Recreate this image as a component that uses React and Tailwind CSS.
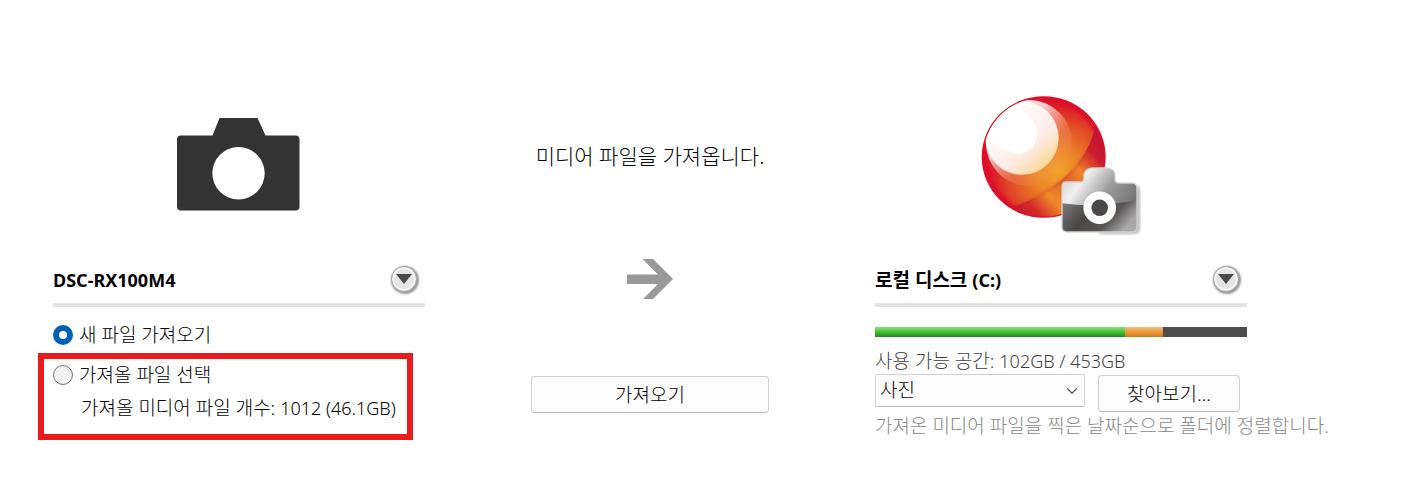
import { ChevronDown } from "lucide-react";

function CameraIcon() {
  return (
    <svg width="124" height="94" viewBox="0 0 124 94" aria-hidden="true">
      <path
        fill="#333333"
        fillRule="evenodd"
        d="M42.500 1H80.500L88.500 18.500H118.500Q122.500 18.500 122.500 22.500V89.500Q122.500 93.500 118.500 93.500H4Q0 93.500 0 89.500V22.500Q0 18.500 4 18.500H35.500ZM61.500 30A26.200 26.200 0 1 0 61.500 82.400A26.200 26.200 0 1 0 61.500 30Z"
      />
    </svg>
  );
}

function OrbIcon() {
  return (
    <svg width="160" height="140" viewBox="21 16 160 140" aria-hidden="true">
      <defs>
        <radialGradient id="orb" gradientUnits="userSpaceOnUse" cx="98" cy="92" r="66">
          <stop offset="0" stopColor="#f2a42c" />
          <stop offset="0.35" stopColor="#ec8526" />
          <stop offset="0.75" stopColor="#e24a26" />
          <stop offset="1" stopColor="#dc1a28" />
        </radialGradient>
        <linearGradient id="wedge" gradientUnits="userSpaceOnUse" x1="142" y1="50" x2="52" y2="134">
          <stop offset="0" stopColor="#bd1238" />
          <stop offset="0.18" stopColor="#cc1c2e" />
          <stop offset="0.36" stopColor="#ec8628" />
          <stop offset="0.5" stopColor="#e0602a" />
          <stop offset="0.68" stopColor="#ee8c28" />
          <stop offset="0.84" stopColor="#d42a2a" />
          <stop offset="1" stopColor="#bd1238" />
        </linearGradient>
        <linearGradient id="halo" gradientUnits="userSpaceOnUse" x1="38" y1="28" x2="98" y2="94">
          <stop offset="0" stopColor="#fff" />
          <stop offset="0.35" stopColor="#fff" stopOpacity="0.75" />
          <stop offset="0.7" stopColor="#f5a080" stopOpacity="0.3" />
          <stop offset="1" stopColor="#f5a080" stopOpacity="0" />
        </linearGradient>
        <linearGradient id="shine" gradientUnits="userSpaceOnUse" x1="40" y1="34" x2="86" y2="88">
          <stop offset="0" stopColor="#fff" />
          <stop offset="0.65" stopColor="#fdebe4" />
          <stop offset="1" stopColor="#f9d790" />
        </linearGradient>
        <linearGradient id="metal" x1="0" y1="0" x2="1" y2="0.6">
          <stop offset="0" stopColor="#c4c4c4" />
          <stop offset="0.3" stopColor="#f0f0f0" />
          <stop offset="0.6" stopColor="#9a9a9a" />
          <stop offset="1" stopColor="#666" />
        </linearGradient>
        <linearGradient id="base" x1="0" y1="0" x2="1" y2="0.4">
          <stop offset="0" stopColor="#858585" />
          <stop offset="0.45" stopColor="#4a4646" />
          <stop offset="0.75" stopColor="#5a5656" />
          <stop offset="1" stopColor="#a8a8a8" />
        </linearGradient>
        <clipPath id="ball">
          <ellipse cx="83.700" cy="77" rx="60.600" ry="59.500" />
        </clipPath>
        <clipPath id="body">
          <path d="M106 102H121Q124 102 124 98V94Q126 88 133 88H146Q154 88 155 94V99Q155 103 159 103H172Q177 103 177 108V147Q177 152 172 152H107Q102 152 102 147V107Q102 102 106 102Z" />
        </clipPath>
        <filter id="soft" x="-20%" y="-20%" width="140%" height="140%">
          <feGaussianBlur stdDeviation="1.500" />
        </filter>
        <filter id="edge" x="-10%" y="-10%" width="120%" height="120%">
          <feGaussianBlur stdDeviation="0.500" />
        </filter>
      </defs>
      <ellipse cx="83.700" cy="77" rx="62" ry="60.800" fill="#dc0f2b" />
      <circle cx="84.500" cy="78" r="56" fill="url(#orb)" filter="url(#soft)" />
      <g clipPath="url(#ball)">
        <path d="M137 40Q131 72 108 94Q84 118 46 129L60 145H120L150 110V50Z" fill="url(#wedge)" filter="url(#edge)" />
        <path d="M133 57Q125 80 107 96Q86 115 58 125" fill="none" stroke="#c3302a" strokeWidth="2" opacity="0.4" filter="url(#soft)" />
        <g filter="url(#edge)">
          <circle cx="69" cy="63" r="43" fill="url(#halo)" />
          <circle cx="62" cy="58" r="36.700" fill="url(#shine)" />
        </g>
        <circle cx="58" cy="54" r="19.500" fill="#fff" filter="url(#edge)" />
        <ellipse cx="49" cy="48" rx="21" ry="22" fill="#fff" filter="url(#soft)" />
      </g>
      <path d="M108 105H174Q180 105 180 111V149Q180 154 174 154H140Z" fill="#999" opacity="0.7" filter="url(#soft)" />
      <g clipPath="url(#body)">
        <rect x="100" y="86" width="80" height="68" fill="url(#metal)" />
        <path d="M100 123Q140 129 179 119V154H100Z" fill="url(#base)" />
      </g>
      <path
        d="M106 102H121Q124 102 124 98V94Q126 88 133 88H146Q154 88 155 94V99Q155 103 159 103H172Q177 103 177 108V147Q177 152 172 152H107Q102 152 102 147V107Q102 102 106 102Z"
        fill="none"
        stroke="#d2d4d4"
        strokeWidth="1.300"
      />
      <circle cx="139.700" cy="127.800" r="12.300" fill="#4b4848" stroke="#fff" strokeWidth="8" />
    </svg>
  );
}

function ArrowIcon() {
  return (
    <svg width="46" height="40" viewBox="0 0 46 40" aria-hidden="true">
      <path fill="#999" d="M0 15.500H31L15.500 0H26L46 20L26 40H16L31 25H0Z" />
    </svg>
  );
}

function DeviceHeader({ children, menuLabel }) {
  return (
    <div className="mt-4 flex h-[53px] items-center justify-between border-b-4 border-[#e4e4e4] pr-2">
      <h2 className="pt-1 text-[19px] font-bold">{children}</h2>
      <button
        type="button"
        aria-label={menuLabel}
        className="flex size-[26px] items-center justify-center rounded-full border border-[#a5a5a5] bg-[#e5e5e5] shadow-[inset_0_0_0_2px_#f6f6f6,1px_1px_2px_1px_#999999]"
      >
        <svg width="16" height="10" viewBox="0 0 16 10" aria-hidden="true">
          <path d="M0 0H16L8 10Z" fill="#4b4b4b" />
        </svg>
      </button>
    </div>
  );
}

const radioStyle =
  "size-5 shrink-0 appearance-none rounded-full border border-[#767676] bg-[#f2f2f2] checked:border-[6px] checked:border-[#005fb8] checked:bg-white";

const buttonStyle =
  "h-[37px] rounded border border-[#d0d0d0] border-b-[#bababa] bg-[#fdfdfd] pt-0.5 text-center leading-none";

const usage = [
  { id: "used", share: 250, color: "bg-linear-to-b from-[#85e66d] via-[#48bd3b] to-[#168b1b]" },
  { id: "incoming", share: 38, color: "bg-linear-to-b from-[#f8bd72] via-[#e79a3f] to-[#cf7617]" },
  { id: "free", share: 84, color: "bg-[#4d4d4d]" },
];

export default function App() {
  return (
    <main className="min-h-screen bg-white pt-[94px] pr-[178px] pl-[53px] font-['Noto_Sans','Noto_Sans_CJK_KR',sans-serif] text-[19px] font-light text-black">
      <div className="grid grid-cols-[372fr_238fr_372fr] gap-x-[106px]">
        <section className="min-w-0">
          <div className="flex h-36 items-center justify-center pb-1">
            <CameraIcon />
          </div>
          <DeviceHeader menuLabel="장치 선택">
            <span className="text-lg">DSC-RX100M4</span>
          </DeviceHeader>
          <label className="mt-[18px] flex h-5 items-center gap-1.5 whitespace-nowrap">
            <input type="radio" name="mode" defaultChecked className={radioStyle} />
            새 파일 가져오기
          </label>
          <div className="mt-2 mr-3 -ml-[15px] h-[87px] border-6 border-[#e81c1c] pl-[9px]">
            <label className="mt-[6px] flex h-5 items-center gap-1.5 whitespace-nowrap">
              <input type="radio" name="mode" className={radioStyle} />
              가져올 파일 선택
            </label>
            <p className="mt-[13px] pl-7 leading-5 whitespace-nowrap">
              가져올 미디어 파일 개수: <span className="text-lg/5">1012 (46.1GB)</span>
            </p>
          </div>
        </section>

        <section className="flex min-w-0 flex-col">
          <p className="mt-12 text-center text-[21px]/7 whitespace-nowrap">미디어 파일을 가져옵니다.</p>
          <div className="mt-[89px] flex justify-center">
            <ArrowIcon />
          </div>
          <button type="button" className={`mt-[77px] ${buttonStyle}`}>
            가져오기
          </button>
        </section>

        <section className="min-w-0">
          <div className="flex h-36 items-center justify-center">
            <OrbIcon />
          </div>
          <DeviceHeader menuLabel="드라이브 선택">
            로컬 디스크 <span className="text-lg">(C:)</span>
          </DeviceHeader>
          <div className="mt-5 flex h-2.5">
            {usage.map((part) => (
              <div key={part.id} className={part.color} style={{ flexGrow: part.share }} />
            ))}
          </div>
          <p className="mt-3 leading-6 whitespace-nowrap text-[#404040]">
            사용 가능 공간: <span className="text-lg/6">102GB / 453GB</span>
          </p>
          <div className="mt-px flex items-start gap-[13px]">
            <div className="grid w-[210px] items-center">
              <select
                aria-label="폴더"
                className="col-start-1 row-start-1 h-[33px] appearance-none rounded-xs border border-[#d0d0d0] border-b-[#bababa] bg-[#fdfdfd] pl-1 leading-none"
              >
                <option>사진</option>
              </select>
              <ChevronDown
                size={18}
                strokeWidth={1.5}
                className="pointer-events-none col-start-1 row-start-1 mr-1 justify-self-end text-[#555555]"
              />
            </div>
            <button type="button" className={`mt-px w-[142px] ${buttonStyle}`}>
              찾아보기...
            </button>
          </div>
          <p className="mt-0.5 leading-6 whitespace-nowrap text-[#888888]">
            가져온 미디어 파일을 찍은 날짜순으로 폴더에 정렬합니다.
          </p>
        </section>
      </div>
    </main>
  );
}
